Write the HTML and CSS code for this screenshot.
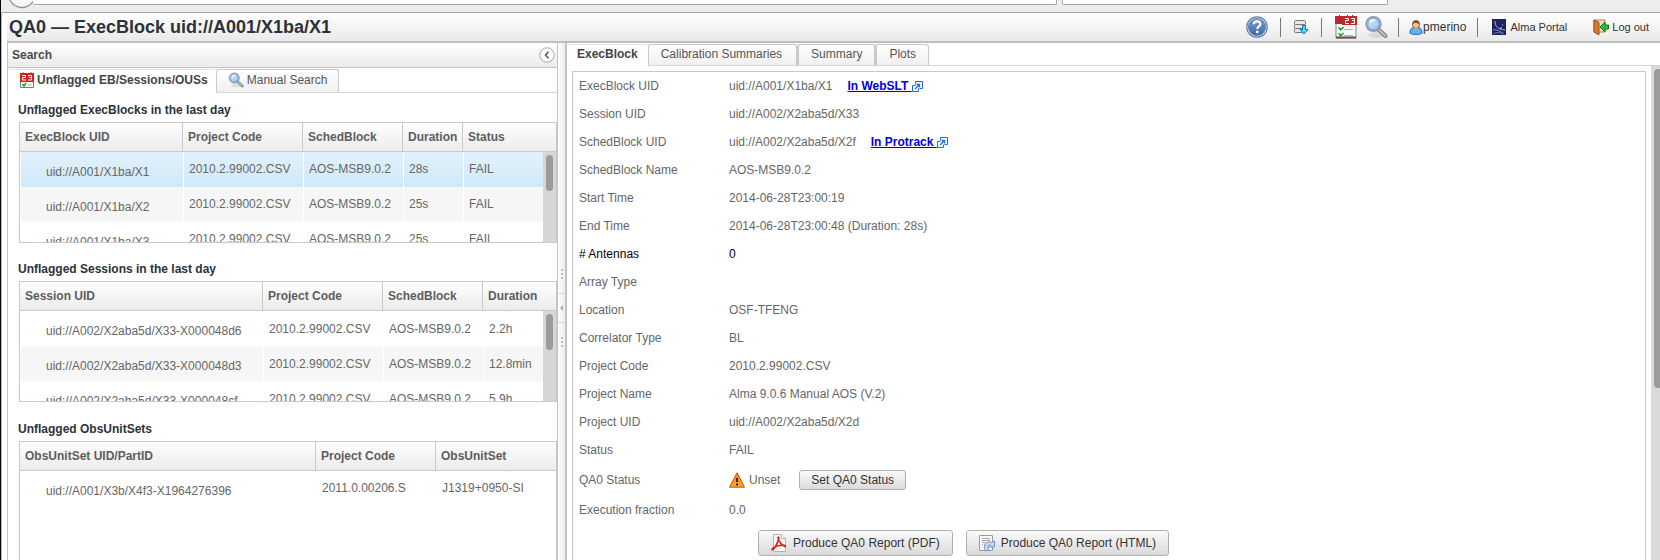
FILE: index.html
```html
<!DOCTYPE html>
<html lang="en">
<head>
<meta charset="utf-8">
<title>QA0 — ExecBlock uid://A001/X1ba/X1</title>
<link rel="stylesheet" href="styles.css">
</head>
<body>
<svg class="defs" aria-hidden="true">
  <defs>
    <linearGradient id="blue" x1="0" y1="0" x2="0" y2="1"><stop offset="0" stop-color="#7ba0cc"/><stop offset="1" stop-color="#3a68a5"/></linearGradient>
    <linearGradient id="amber" x1="0" y1="0" x2="0" y2="1"><stop offset="0" stop-color="#f57d10"/><stop offset="1" stop-color="#ffab35"/></linearGradient>
    <linearGradient id="lens" x1="0" y1="0" x2="1" y2="1"><stop offset="0" stop-color="#e9f4ff"/><stop offset="1" stop-color="#8cb7e8"/></linearGradient>
    <symbol id="search" viewBox="0 0 24 24">
      <ellipse cx="13" cy="20" rx="9" ry="3" fill="#000" opacity=".09"/>
      <path d="M14.500 14.500l7 6.500" stroke="#777" stroke-width="4" stroke-linecap="round"/>
      <path d="M14.500 14.500l7 6.500" stroke="#c2c2c2" stroke-width="2" stroke-linecap="round"/>
      <circle cx="9.500" cy="9" r="7.300" fill="url(#lens)" stroke="#8d96a3" stroke-width="1.600"/>
      <circle cx="9.500" cy="9" r="5.700" fill="none" stroke="#6f9fdc"/>
      <path d="M6 8a4 4 0 0 1 5-3" stroke="#fff" stroke-width="1.500" fill="none"/>
    </symbol>
    <symbol id="calendar-small" viewBox="0 0 14 16">
      <path d="M.5 8h13v7.500H.5z" fill="#f7fafa" stroke="#8a7474"/>
      <path d="M0 1h14v9H0z" fill="#c9262a"/>
      <path d="M3 0v1M11 0v1" stroke="#777"/>
      <path d="M2 3.500h3.500v2h-3v2.500H6M8 3.500h3.500V8H8M9 5.500h2.500" stroke="#fff" fill="none"/>
      <path d="M2.500 12l1.500 2 2-3" stroke="#19a01d" stroke-width="1.500" fill="none"/>
      <path d="M7 13h5" stroke="#b5c2c2"/>
    </symbol>
    <symbol id="external" viewBox="0 0 11 11">
      <path d="M3.500 4.500h-3v6h6v-3M3.500 3.500v-3h7v7h-3" fill="none" stroke="#1271e8"/>
      <path d="M3 8l4.500-4.500M4.500 3.500h3v3" fill="none" stroke="#1271e8" stroke-width="1.300"/>
    </symbol>
  </defs>
</svg>

<div class="frame">
  <div class="chrome" aria-hidden="true">
    <svg class="back" width="30" height="9" viewBox="0 0 30 9"><circle cx="15" cy="-6" r="13.500" fill="#f8f8f8" stroke="#8c99a5" stroke-width="1.300"/></svg>
    <div class="field field-address"></div>
    <div class="field field-find"></div>
  </div>

  <div class="app">
    <header class="titlebar">
      <h1>QA0 — ExecBlock uid://A001/X1ba/X1</h1>
      <nav class="tools">
        <button class="tool" aria-label="Help">
          <svg width="22" height="22" viewBox="0 0 22 22"><circle cx="11" cy="11" r="10.200" fill="#f4f8fc" stroke="#5b82b5" stroke-width="1.200"/><circle cx="11" cy="11" r="8.600" fill="url(#blue)" stroke="#37629b" stroke-width=".6"/><path d="M7.800 8.200c.2-3.800 6.600-3.600 6.500 0 0 2.300-2.800 2.200-3 4.800" fill="none" stroke="#fff" stroke-width="2.200"/><circle cx="11.300" cy="16" r="1.400" fill="#fff"/></svg>
        </button>
        <span class="sep"></span>
        <button class="tool" aria-label="Load">
          <svg width="16" height="16" viewBox="0 0 16 16"><g fill="#e6e6e6" stroke="#777"><rect x="1.500" y="1.500" width="11" height="4" rx="1"/><rect x="1.500" y="5.500" width="11" height="4" rx="1"/><rect x="1.500" y="9.500" width="11" height="4" rx="1"/></g><path d="M9.500 6.500h3v4H15l-4 4.500-4-4.500h2.500z" fill="#5fd8ff" stroke="#1670dc"/></svg>
        </button>
        <span class="sep"></span>
        <button class="tool tight" aria-label="Calendar">
          <svg width="22" height="24" viewBox="0 0 22 24"><path d="M1 8h20v15H1z" fill="#f2faf8" stroke="#7f8b88"/><path d="M1 22.500h20" stroke="#6b4f4f" stroke-width="2"/><path d="M0 1h22v9H7V9H0z" fill="#c5262b"/><path d="M4.500 0v6h3M12.500 0v1M17.500 0v1" stroke="#444" fill="none"/><path d="M10 3.500h3.500v2h-3v3H14M16 3.500h3.500v5H16M17 5.500h2.500" stroke="#fff" fill="none"/><path d="M3.500 12l2 3 3-3M5.500 13v3M3.500 18l2 3 3-3M5.500 19v3" stroke="#23902a" stroke-width="1.300" fill="none"/><path d="M9 14.500h9M9 20.500h9" stroke="#a9b9b5"/></svg>
        </button>
        <button class="tool tight" aria-label="Search"><svg width="24" height="24"><use href="#search"/></svg></button>
        <span class="sep sep-near"></span>
        <span class="user">
          <svg width="14" height="16" viewBox="0 0 16 16" preserveAspectRatio="none"><path d="M1 14c0-5 4-6 7-6s7 1 7 6c-3 2-11 2-14 0z" fill="#5eb1f7" stroke="#2465bc"/><circle cx="8" cy="5.500" r="4" fill="#f6c18d" stroke="#9c5a20"/><path d="M3.800 6C3 0 13 0 12.200 6 11 3.800 8 4.500 6 3.800z" fill="#8b4a14"/><path d="M6 9.500l2 2 2-2" fill="#f4c08a"/></svg>pmerino</span>
        <span class="sep"></span>
        <a class="portal" href="#">
          <svg width="16" height="16" viewBox="0 0 16 16"><path d="M1 0h14v16H1z" fill="#20215f"/><path d="M4 2c0 6 3 8 10 9" stroke="#a8b2d6" fill="none"/><path d="M2 11c4-1 6 1 10 3" stroke="#8090c8" fill="none"/><path d="M9 9h2M11 6h1" stroke="#d5dcf4"/><path d="M2 15c3-2 7-2 11 0" stroke="#5d74b3" fill="none"/></svg>Alma Portal</a>
        <a class="logout" href="#">
          <svg width="16" height="16" viewBox="0 0 16 16"><path d="M1 1h11v12H1z" fill="#e7dccb" stroke="#c07a3a"/><path d="M1 1l5 2.500V16l-5-3z" fill="#d87b2c" stroke="#9b4c12"/><path d="M15.500 6H12V3L7 8l5 5v-3h3.500z" fill="#2fb936" stroke="#0d7a14"/></svg>Log out</a>
      </nav>
    </header>

    <div class="body">
      <aside class="sidebar">
        <div class="caption"><h2>Search</h2>
          <button class="collapse" aria-label="Collapse"><svg width="16" height="16" viewBox="0 0 16 16"><circle cx="8" cy="8" r="7.200" fill="#fdfdfd" stroke="#a9a9a9"/><path d="M9.500 4.800L6.500 8l3 3.200" fill="none" stroke="#555" stroke-width="1.500"/></svg></button>
        </div>
        <div class="tabs" role="tablist">
          <button class="tab active icon-tab" role="tab" aria-selected="true"><svg width="14" height="16"><use href="#calendar-small"/></svg>Unflagged EB/Sessions/OUSs</button>
          <button class="tab icon-tab second" role="tab"><svg width="16" height="16"><use href="#search"/></svg>Manual Search</button>
        </div>
        <div class="lists">
          <h3>Unflagged ExecBlocks in the last day</h3>
          <div class="grid clipped">
            <table>
              <colgroup><col class="w163"><col class="w120"><col class="w100"><col class="w60"><col></colgroup>
              <thead><tr><th>ExecBlock UID</th><th>Project Code</th><th>SchedBlock</th><th>Duration</th><th>Status</th></tr></thead>
              <tbody>
                <tr class="selected"><td>uid://A001/X1ba/X1</td><td>2010.2.99002.CSV</td><td>AOS-MSB9.0.2</td><td>28s</td><td>FAIL</td></tr>
                <tr><td>uid://A001/X1ba/X2</td><td>2010.2.99002.CSV</td><td>AOS-MSB9.0.2</td><td>25s</td><td>FAIL</td></tr>
                <tr><td>uid://A001/X1ba/X3</td><td>2010.2.99002.CSV</td><td>AOS-MSB9.0.2</td><td>25s</td><td>FAIL</td></tr>
              </tbody>
            </table>
            <div class="scroll"><div class="thumb"></div></div>
          </div>

          <h3>Unflagged Sessions in the last day</h3>
          <div class="grid clipped sessions">
            <table>
              <colgroup><col class="w243"><col class="w120"><col class="w100"><col></colgroup>
              <thead><tr><th>Session UID</th><th>Project Code</th><th>SchedBlock</th><th>Duration</th></tr></thead>
              <tbody>
                <tr><td>uid://A002/X2aba5d/X33-X000048d6</td><td>2010.2.99002.CSV</td><td>AOS-MSB9.0.2</td><td>2.2h</td></tr>
                <tr><td>uid://A002/X2aba5d/X33-X000048d3</td><td>2010.2.99002.CSV</td><td>AOS-MSB9.0.2</td><td>12.8min</td></tr>
                <tr><td>uid://A002/X2aba5d/X33-X000048cf</td><td>2010.2.99002.CSV</td><td>AOS-MSB9.0.2</td><td>5.9h</td></tr>
              </tbody>
            </table>
            <div class="scroll"><div class="thumb"></div></div>
          </div>

          <h3>Unflagged ObsUnitSets</h3>
          <div class="grid open">
            <table>
              <colgroup><col class="w296"><col class="w120"><col></colgroup>
              <thead><tr><th>ObsUnitSet UID/PartID</th><th>Project Code</th><th>ObsUnitSet</th></tr></thead>
              <tbody><tr><td>uid://A001/X3b/X4f3-X1964276396</td><td>2011.0.00206.S</td><td>J1319+0950-SI</td></tr></tbody>
            </table>
          </div>
        </div>
      </aside>

      <div class="splitter">
        <span class="dots"></span>
        <button class="fold" aria-label="Fold sidebar"></button>
        <span class="dots"></span>
      </div>

      <main class="detail">
        <div class="tabs" role="tablist">
          <button class="tab active" role="tab" aria-selected="true">ExecBlock</button>
          <button class="tab second" role="tab">Calibration Summaries</button>
          <button class="tab" role="tab">Summary</button>
          <button class="tab" role="tab">Plots</button>
        </div>
        <div class="pane">
          <div class="card">
            <dl class="facts">
              <dt>ExecBlock UID</dt><dd>uid://A001/X1ba/X1 <a class="ext" href="#"><span>In WebSLT&nbsp;</span><svg width="11" height="11"><use href="#external"/></svg></a></dd>
              <dt>Session UID</dt><dd>uid://A002/X2aba5d/X33</dd>
              <dt>SchedBlock UID</dt><dd>uid://A002/X2aba5d/X2f <a class="ext" href="#"><span>In Protrack&nbsp;</span><svg width="11" height="11"><use href="#external"/></svg></a></dd>
              <dt>SchedBlock Name</dt><dd>AOS-MSB9.0.2</dd>
              <dt>Start Time</dt><dd>2014-06-28T23:00:19</dd>
              <dt>End Time</dt><dd>2014-06-28T23:00:48 (Duration: 28s)</dd>
              <dt class="strong"># Antennas</dt><dd class="strong">0</dd>
              <dt>Array Type</dt><dd></dd>
              <dt>Location</dt><dd>OSF-TFENG</dd>
              <dt>Correlator Type</dt><dd>BL</dd>
              <dt>Project Code</dt><dd>2010.2.99002.CSV</dd>
              <dt>Project Name</dt><dd>Alma 9.0.6 Manual AOS (V.2)</dd>
              <dt>Project UID</dt><dd>uid://A002/X2aba5d/X2d</dd>
              <dt>Status</dt><dd>FAIL</dd>
              <dt class="tall">QA0 Status</dt>
              <dd class="tall"><svg class="warn" width="16" height="16" viewBox="0 0 16 16"><path d="M8 .8L15.500 15.200H.5z" fill="url(#amber)" stroke="#c9540a" stroke-linejoin="round"/><path d="M8 6v4M8 11.500v2" stroke="#4a2500" stroke-width="2"/></svg>Unset <button class="btn btn-status">Set QA0 Status</button></dd>
              <dt>Execution fraction</dt><dd>0.0</dd>
            </dl>
            <div class="actions">
              <button class="btn"><svg width="16" height="18" viewBox="0 0 16 18"><path d="M2.500.5h8l4 4v13h-12z" fill="#f7f7f7" stroke="#b3b3b3"/><path d="M10.500.5v4h4" fill="#fff" stroke="#b3b3b3"/><path d="M7.500 3c-1.500 0 .5 6 5.500 9 2 1.200 2-.6 0-.8-4-.2-9 1-11.500 3.300C0 16 2 16.500 3.500 14 6 10 9 3.300 7.500 3z" fill="none" stroke="#e01a1a" stroke-width="1.500"/></svg>Produce QA0 Report (PDF)</button>
              <button class="btn"><svg width="16" height="18" viewBox="0 0 16 18"><path d="M.5 1.500h13v15H.5z" fill="#f7f7f7" stroke="#9b9b9b"/><path d="M3 4.500h8M3 6.500h8M3 8.500h3M3 10.500h1" stroke="#a5a5a5"/><path d="M6.500 17C3 11 8 6 12.500 8.500L15.500 7v6h-6l2-2c-2-1-4 2-1.500 5z" fill="#c6daf3" stroke="#6f94c6"/></svg>Produce QA0 Report (HTML)</button>
            </div>
          </div>
          <div class="page-scroll"><div class="page-thumb"></div></div>
        </div>
      </main>
    </div>
  </div>
</div>
</body>
</html>
```

FILE: styles.css
```css
* { box-sizing: border-box; }

body {
  margin: 0;
  background: #fff;
  color: #666;
  font: 12px/16px "Liberation Sans", Arial, sans-serif;
}

h1, h2, h3, dl, dd { margin: 0; }

button {
  margin: 0;
  padding: 0;
  border: 0;
  background: none;
  color: inherit;
  font: inherit;
}

svg { display: block; flex: none; }
.defs { position: absolute; width: 0; height: 0; }

.frame {
  display: flex;
  flex-direction: column;
  height: 100vh;
  overflow: hidden;
  border-left: 1px solid #05080c;
}

/* Browser strip above the application */
.chrome {
  display: flex;
  flex: none;
  height: 13px;
  padding: 0 272px 0 6px;
  background: #ededed;
  border-bottom: 1px solid #a5a5a5;
}

.field {
  height: 5px;
  background: #fff;
  border: 1px solid #a5a5a5;
  border-top: 0;
  border-radius: 0 0 2px 2px;
}

.field-address { flex: 1; border-left: 0; margin-left: -4px; }
.field-find { width: 326px; margin-left: 5px; }

.app {
  display: flex;
  flex: 1;
  flex-direction: column;
  min-height: 0;
  padding-left: 5px;
  border-left: 1px solid #bbb;
}

/* Title bar */
.titlebar {
  display: flex;
  flex: none;
  align-items: center;
  justify-content: space-between;
  height: 30px;
  padding: 0 11px 0 2px;
  background: linear-gradient(#fff, #e9e9e9);
  border-bottom: 2px solid #bfbfbf;
}

h1 { color: #2c3338; font-size: 18px; line-height: 24px; }

.tools { display: flex; align-items: center; color: #333; }
.tool { margin: 0 12px; }
.tool.tight { margin: 0 -6px 0 13px; }
.sep { width: 1px; height: 19px; background: #777; }
.sep-near { margin-left: 16px; }
.user, .portal, .logout { display: flex; align-items: center; }
.user { margin: 0 11px 0 10px; }
.portal, .logout { gap: 3px; color: #333; font-size: 11px; text-decoration: none; }
.portal { margin: 0 26px 0 13px; }

.body { display: flex; flex: 1; min-height: 0; }

/* Search sidebar */
.sidebar {
  display: flex;
  flex: 0 0 551px;
  flex-direction: column;
  border: solid #c3c3c3;
  border-width: 0 1px;
}

.caption {
  display: flex;
  flex: none;
  align-items: center;
  justify-content: space-between;
  height: 25px;
  padding: 0 2px 0 4px;
  background: linear-gradient(#fff, #ebebeb);
  border-bottom: 1px solid #c3c3c3;
}

h2 { color: #4c4c4c; font-size: 12px; line-height: 16px; }

.tabs {
  display: flex;
  flex: none;
  height: 25px;
  padding-top: 1px;
  border-bottom: 1px solid #d6d6d6;
}

.tab {
  display: flex;
  align-items: center;
  height: 23px;
  padding: 0 12px 2px;
  background: linear-gradient(#fff, #f0f0f0);
  border: 1px solid #c9c9c9;
  border-left-width: 2px;
  border-bottom: 0;
  border-radius: 3px 3px 0 0;
  color: #555;
}

.tab.second { border-left-width: 1px; }

.tab.active {
  height: 24px;
  padding: 0 10px 3px;
  background: #fff;
  border-color: #e3e3e3;
  border-width: 1px 0 0;
  color: #444;
  font-weight: bold;
}

.tab.icon-tab { gap: 3px; padding: 0 11px 2px; }
.sidebar .tab.active { padding: 0 8px 3px 12px; }

.lists {
  display: flex;
  flex: 1;
  flex-direction: column;
  min-height: 0;
  padding: 9px 0 0 11px;
}

h3 {
  flex: none;
  margin: 0 0 4px -1px;
  color: #2c3338;
  font-size: 12px;
  line-height: 16px;
}

.grid {
  position: relative;
  flex: 1 0 auto;
  overflow: hidden;
  border: 1px solid #c9c9c9;
}

.grid.open { border-bottom: 0; }
.clipped { flex: none; height: 121px; margin-bottom: 18px; }
.clipped.sessions { margin-bottom: 19px; }

table { width: 100%; table-layout: fixed; border-spacing: 0; white-space: nowrap; }
.w60 { width: 60px; }
.w100 { width: 100px; }
.w120 { width: 120px; }
.w163 { width: 163px; }
.w243 { width: 243px; }
.w296 { width: 296px; }

th {
  height: 29px;
  padding: 0 0 0 5px;
  background: linear-gradient(#fff, #ebebeb);
  border-bottom: 1px solid #c9c9c9;
  border-right: 1px solid #c9c9c9;
  color: #5e5e5e;
  text-align: left;
}

th:last-child { border-right: 0; }

td {
  height: 35px;
  padding: 9px 0 0 5px;
  border-left: 1px solid #fff;
  vertical-align: top;
}

.sessions td { padding-top: 10px; }
td:first-child { padding: 12px 0 0 25px; }
tbody tr:nth-child(even) { background: #f6f6f6; }
tbody tr.selected { background: linear-gradient(#e2f1fa, #cfe9f8); }

.scroll {
  position: absolute;
  top: 29px;
  right: 0;
  bottom: 0;
  width: 13px;
  padding: 3px;
  background: #d6d6d6;
}

.thumb { height: 36px; background: #9b9b9b; border-radius: 4px; }

/* Draggable divider */
.splitter {
  display: flex;
  flex: 0 0 9px;
  flex-direction: column;
  align-items: center;
  justify-content: center;
  gap: 14px;
  padding-top: 12px;
  background: linear-gradient(90deg, #fff, #ececec);
  border-right: 2px solid #c3c3c3;
}

.dots {
  width: 2px;
  height: 10px;
  background: repeating-linear-gradient(#bdbdbd 0 2px, transparent 2px 4px);
}

.fold {
  display: flex;
  align-items: center;
  justify-content: center;
  align-self: stretch;
  height: 30px;
  border: solid #d6d6d6;
  border-width: 1px 0;
}

.fold::before {
  content: "";
  border: solid transparent;
  border-width: 3px 3px 3px 0;
  border-right-color: #aaa;
}

/* Detail area */
.detail { display: flex; flex: 1; flex-direction: column; min-width: 0; }
.detail .tabs { height: 23px; padding-top: 1px; }
.detail .tab { height: 21px; }
.detail .tab.active { height: 22px; }
.detail .tab.second { padding: 0 14px 2px 12px; }

.pane {
  display: flex;
  flex: 1;
  gap: 5px;
  min-height: 0;
  padding-left: 5px;
}

.card {
  flex: 1;
  margin-top: 5px;
  padding-left: 6px;
  border: 1px solid #c9c9c9;
  border-bottom: 0;
}

.facts {
  display: grid;
  grid-template-columns: 150px 1fr;
  grid-auto-rows: minmax(28px, auto);
}

dt, dd { display: flex; align-items: center; }
.tall { min-height: 32px; }
.strong { color: #000; }

.ext { display: flex; align-items: center; margin-left: 15px; color: #00d; font-weight: bold; text-decoration: none; }
.ext span { text-decoration: underline; }

.btn {
  display: flex;
  align-items: center;
  gap: 6px;
  height: 26px;
  padding: 0 12px;
  background: linear-gradient(#fafafa, #dadada);
  border: 1px solid #b1b1b1;
  border-radius: 3px;
  color: #333;
}

.btn-status { height: 20px; margin-left: 19px; padding: 0 11px; }
.warn { margin-right: 4px; }

.actions { display: flex; gap: 13px; padding: 6px 0 0 179px; }

.page-scroll { flex: 0 0 9px; padding: 3px 0 0 3px; background: #dadada; }
.page-thumb { height: 65%; background: #9b9b9b; border-radius: 4px 0 0 4px; }
```
